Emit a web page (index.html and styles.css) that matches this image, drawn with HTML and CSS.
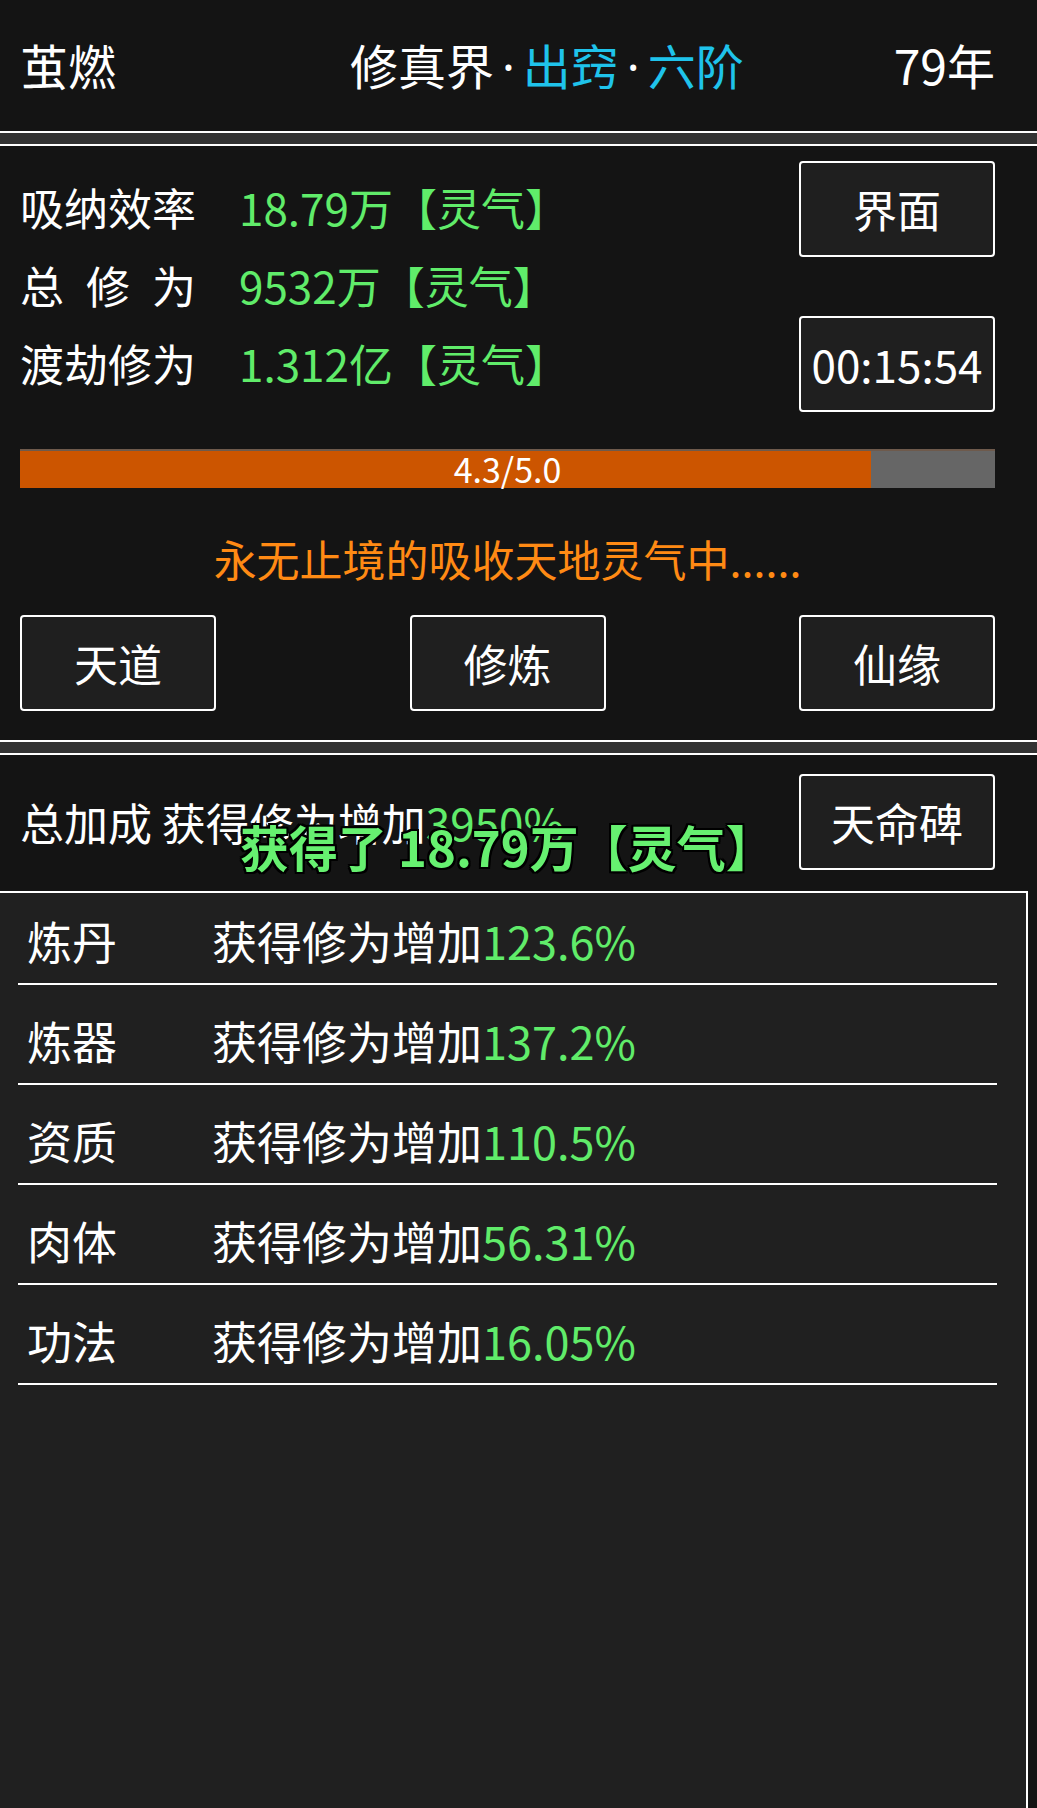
FILE: index.html
```html
<!DOCTYPE html>
<html lang="zh-CN">
<head>
  <meta charset="UTF-8">
  <meta name="viewport" content="width=device-width, initial-scale=1.0">
  <title>修真界</title>
  <link rel="stylesheet" href="styles.css">
</head>
<body>
  <div class="screen">
    <header class="topbar">
      <span class="player">茧燃</span>
      <span class="realm">修真界<span class="dot">·</span><span class="hl">出窍</span><span class="dot">·</span><span class="hl">六阶</span></span>
      <span class="age">79年</span>
    </header>

    <div class="divider"></div>

    <section class="cultivate">
      <div class="stats">
        <ul class="stat-list">
          <li><span class="stat-label">吸纳效率</span><span class="stat-value">18.79万【灵气】</span></li>
          <li><span class="stat-label">总 修 为</span><span class="stat-value">9532万【灵气】</span></li>
          <li><span class="stat-label">渡劫修为</span><span class="stat-value">1.312亿【灵气】</span></li>
        </ul>
        <div class="side-buttons">
          <button class="btn">界面</button>
          <button class="btn">00:15:54</button>
        </div>
      </div>

      <div class="progress">
        <div class="progress-fill" style="width: 87.3%"></div>
        <span class="progress-text">4.3/5.0</span>
      </div>

      <p class="status">永无止境的吸收天地灵气中......</p>

      <div class="actions">
        <button class="btn">天道</button>
        <button class="btn">修炼</button>
        <button class="btn">仙缘</button>
      </div>
    </section>

    <div class="divider"></div>

    <section class="bonus-head">
      <p class="bonus-total">总加成 获得修为增加<span class="green">3950%</span></p>
      <button class="btn">天命碑</button>
      <div class="toast">获得了 18.79万【灵气】</div>
    </section>

    <div class="bonus-panel">
      <ul class="bonus-list">
        <li><span class="bonus-name">炼丹</span><span>获得修为增加<span class="green">123.6%</span></span></li>
        <li><span class="bonus-name">炼器</span><span>获得修为增加<span class="green">137.2%</span></span></li>
        <li><span class="bonus-name">资质</span><span>获得修为增加<span class="green">110.5%</span></span></li>
        <li><span class="bonus-name">肉体</span><span>获得修为增加<span class="green">56.31%</span></span></li>
        <li><span class="bonus-name">功法</span><span>获得修为增加<span class="green">16.05%</span></span></li>
      </ul>
    </div>
  </div>
</body>
</html>
```

FILE: styles.css
```css
    * {
      box-sizing: border-box;
    }
    body {
      margin: 0;
      background-color: #141414;
      color: #ffffff;
      font-family: "Noto Sans CJK SC", "Noto Sans", sans-serif;
    }
    ul, p {
      margin: 0;
      padding: 0;
      list-style: none;
    }
    .screen {
      min-height: 100vh;
      display: flex;
      flex-direction: column;
    }
    .green {
      color: #60ec6a;
    }

    /* header */
    .topbar {
      height: 131px;
      display: flex;
      align-items: center;
      padding: 0 42px 4px 20px;
      font-size: 48px;
    }
    .player {
      width: 180px;
    }
    .realm {
      flex: 1;
      text-align: center;
    }
    .realm .dot {
      font-family: "Noto Sans", sans-serif;
      margin: 0 8px;
    }
    .hl {
      color: #1fc3eb;
    }
    .divider {
      height: 15px;
      background-color: #333333;
      border-top: 2px solid #ffffff;
      border-bottom: 2px solid #ffffff;
    }

    /* buttons */
    .btn {
      width: 196px;
      height: 96px;
      border: 2px solid #ffffff;
      border-radius: 4px;
      background-color: #1f1f1f;
      color: #ffffff;
      font-family: inherit;
      font-size: 44px;
      padding: 0;
    }

    /* cultivate section */
    .cultivate {
      padding: 15px 42px 29px 20px;
    }
    .stats {
      display: flex;
      justify-content: space-between;
    }
    .stat-list {
      margin-top: 7px;
      font-size: 44px;
    }
    .stat-list li {
      height: 78px;
      line-height: 78px;
      display: flex;
    }
    .stat-label {
      width: 176px;
      text-align: justify;
      text-align-last: justify;
    }
    .stat-value {
      margin-left: 43px;
      color: #60ec6a;
    }
    .side-buttons {
      display: flex;
      flex-direction: column;
      gap: 59px;
    }
    .progress {
      position: relative;
      margin-top: 37px;
      height: 39px;
      background-color: #666666;
      border-top: 2px solid #6e5a4c;
    }
    .progress-fill {
      height: 100%;
      background-color: #cc5500;
    }
    .progress-text {
      position: absolute;
      left: 0;
      right: 0;
      top: 0;
      text-align: center;
      font-size: 34px;
      line-height: 36px;
    }
    .status {
      margin-top: 40px;
      line-height: 60px;
      font-size: 43px;
      text-align: center;
      color: #ff8a14;
    }
    .actions {
      margin-top: 27px;
      display: flex;
      justify-content: space-between;
    }

    /* bonus */
    .bonus-head {
      position: relative;
      display: flex;
      align-items: center;
      justify-content: space-between;
      padding: 19px 42px 21px 20px;
    }
    .bonus-total {
      font-size: 44px;
    }
    .toast {
      position: absolute;
      left: 240px;
      top: 61px;
      line-height: 60px;
      font-size: 49px;
      font-weight: bold;
      color: #66f070;
      text-shadow: 2px 0 0 #000, -2px 0 0 #000, 0 2px 0 #000, 0 -2px 0 #000,
        2px 2px 0 #000, -2px -2px 0 #000, 2px -2px 0 #000, -2px 2px 0 #000;
    }
    .bonus-panel {
      flex: 1;
      width: 1028px;
      background-color: #202020;
      border-top: 2px solid #ffffff;
      border-right: 2px solid #ffffff;
      padding: 0 29px 0 18px;
    }
    .bonus-list li {
      height: 100px;
      display: flex;
      align-items: flex-end;
      padding: 0 0 12px 9px;
      border-bottom: 2px solid #ffffff;
      font-size: 45px;
      line-height: 60px;
    }
    .bonus-list li:first-child {
      height: 92px;
    }
    .bonus-name {
      width: 185px;
    }
```
